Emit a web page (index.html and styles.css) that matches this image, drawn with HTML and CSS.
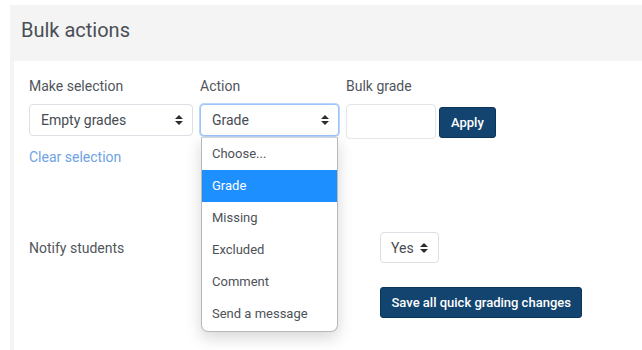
FILE: index.html
```html
<!DOCTYPE html>
<html lang="en">
<head>
    <meta charset="UTF-8">
    <title>Bulk actions</title>
    <link rel="stylesheet" href="styles.css">
</head>
<body>
    <div class="panel">
        <div class="panel-header">
            <h2>Bulk actions</h2>
        </div>
        <div class="panel-body">
            <div class="bulk-grid">
                <label>Make selection</label>
                <label>Action</label>
                <label>Bulk grade</label>

                <div class="select">
                    <span>Empty grades</span>
                    <svg class="caret" width="8" height="12" viewBox="0 0 8 12"><path d="M0 5 L4 1 L8 5 Z M0 7 L8 7 L4 11 Z"/></svg>
                </div>
                <div class="action-cell">
                    <div class="select focused">
                        <span>Grade</span>
                        <svg class="caret" width="8" height="12" viewBox="0 0 8 12"><path d="M0 5 L4 1 L8 5 Z M0 7 L8 7 L4 11 Z"/></svg>
                    </div>
                    <ul class="menu">
                        <li>Choose...</li>
                        <li class="active">Grade</li>
                        <li>Missing</li>
                        <li>Excluded</li>
                        <li>Comment</li>
                        <li>Send a message</li>
                    </ul>
                </div>
                <div class="grade-cell">
                    <div class="text-input"></div>
                    <button class="btn">Apply</button>
                </div>

                <a class="clear-link" href="#">Clear selection</a>
            </div>

            <div class="notify-row">
                <span class="notify-label">Notify students</span>
                <div class="select small">
                    <span>Yes</span>
                    <svg class="caret" width="8" height="12" viewBox="0 0 8 12"><path d="M0 5 L4 1 L8 5 Z M0 7 L8 7 L4 11 Z"/></svg>
                </div>
            </div>
            <div class="save-row">
                <button class="btn">Save all quick grading changes</button>
            </div>
        </div>
    </div>
</body>
</html>
```

FILE: styles.css
```css
body {
    margin: 0;
    padding: 5px 0 0 10px;
    font-family: Roboto, "Liberation Sans", sans-serif;
    font-size: 14px;
    color: #51565c;
    background: #fff;
    height: 100vh;
    box-sizing: border-box;
    overflow: hidden;
}
.panel {
    background: #f4f4f4;
    padding-left: 4px;
    height: 100%;
    display: flex;
    flex-direction: column;
}
.panel-header {
    height: 56px;
    flex-shrink: 0;
    margin-left: -4px;
    padding-left: 11px;
    box-sizing: border-box;
}
h2 {
    margin: 0;
    padding-top: 11px;
    font-size: 20px;
    font-weight: 400;
    line-height: 28px;
    color: #4a4f55;
}
.panel-body {
    background: #fff;
    flex-grow: 1;
    padding: 15px 0 0 15px;
}
.bulk-grid {
    display: grid;
    grid-template-columns: 164px 139px auto;
    column-gap: 7px;
    align-items: start;
}
.bulk-grid label {
    line-height: 20px;
    margin-bottom: 8px;
}
.select {
    height: 32px;
    box-sizing: border-box;
    border: 1px solid #dcdfe3;
    border-radius: 4px;
    display: flex;
    align-items: center;
    justify-content: space-between;
    padding: 0 9px 0 11px;
    color: #474c52;
    background: #fff;
}
.select.focused {
    border-color: #9cc4f7;
    box-shadow: 0 0 0 1px #b8d6fb;
}
.caret {
    fill: #2b2f33;
}
.action-cell {
    position: relative;
}
.menu {
    position: absolute;
    top: 33px;
    left: 1px;
    width: 137px;
    margin: 0;
    padding: 0 0 1px;
    list-style: none;
    background: #fff;
    border: 1px solid #b9b9b9;
    border-top-color: #d6d6d6;
    border-radius: 0 0 7px 7px;
    box-shadow: 0 6px 16px rgba(0, 0, 0, 0.16);
    box-sizing: border-box;
    z-index: 2;
}
.menu li {
    height: 32px;
    line-height: 32px;
    padding-left: 10px;
    font-size: 13px;
    color: #4d5258;
}
.menu li.active {
    background: #1e8fff;
    color: #fff;
}
.grade-cell {
    display: flex;
    align-items: flex-start;
    gap: 3px;
}
.text-input {
    width: 90px;
    height: 35px;
    box-sizing: border-box;
    border: 1px solid #e3e6e9;
    border-radius: 4px;
}
.btn {
    margin-top: 3px;
    height: 31px;
    padding: 0 11px;
    font-family: inherit;
    font-size: 13px;
    font-weight: 500;
    color: #fff;
    background: #12446f;
    border: 1px solid #0b3459;
    border-radius: 3px;
}
.clear-link {
    grid-column: 1;
    margin-top: 8px;
    line-height: 20px;
    color: #6ea3e4;
    text-decoration: none;
}
.notify-row {
    display: flex;
    align-items: center;
    margin-top: 65px;
}
.notify-label {
    width: 351px;
}
.select.small {
    width: 59px;
    height: 31px;
    padding: 0 10px 0 10px;
}
.save-row {
    padding-left: 351px;
    margin-top: 24px;
}
.save-row .btn {
    margin-top: 0;
    padding: 0 10.5px;
}
```
